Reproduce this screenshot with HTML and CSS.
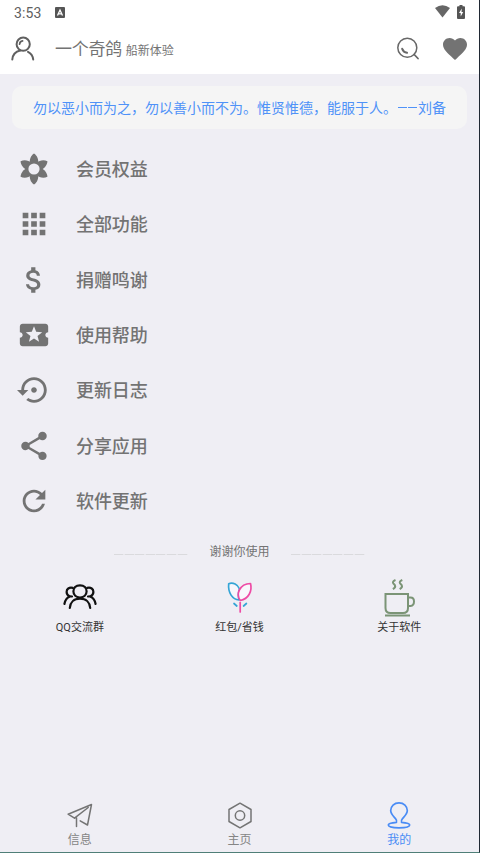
FILE: index.html
```html
<!DOCTYPE html>
<html lang="zh-CN">
<head>
<meta charset="utf-8">
<title>一个奇鸽</title>
<link rel="stylesheet" href="styles.css">
</head>
<body>
<div class="app">
  <header class="top">
    <div class="status">
      <span class="clock">3:53</span>
      <svg class="badge" viewBox="0 0 10 11"><rect width="10" height="11" rx="1" fill="#555"/><path d="M2.500 8.500 5 3l2.500 5.500M3.500 6.800h3" fill="none" stroke="#fff" stroke-width="1.300"/></svg>
      <svg class="wifi" viewBox="0 0 15 13"><path d="M0 3Q7.500-2.500 15 3L7.500 12.500Z" fill="#666"/></svg>
      <svg class="battery" viewBox="0 0 8 14"><path d="M2.500 0h3v1.300H7q1 0 1 1V13q0 1-1 1H1q-1 0-1-1V2.300q0-1 1-1h1.500Z" fill="#555"/><path d="M4.800 3.500 2 8h1.700v3.500L6.200 7H4.500Z" fill="#fff"/></svg>
    </div>
    <div class="bar">
      <svg class="user" viewBox="0 0 24 25" fill="none" stroke="#606060" stroke-width="2" stroke-linecap="round"><circle cx="12.200" cy="8.200" r="6.600"/><path d="M8.600 8.200a3.600 3.600 0 0 1 3-3.400" stroke-width="1.700"/><path d="M1.300 23.500C1.800 18.500 4.800 15.600 9.200 14.600M17 15.800c3 1.400 4.800 4 5.200 7.700"/></svg>
      <h1 class="title">一个奇鸽</h1>
      <span class="sub">船新体验</span>
      <svg class="search" viewBox="0 0 23 23" fill="none" stroke="#686868"><circle cx="10.300" cy="10.700" r="9.500" stroke-width="1.500"/><path d="M17.200 17.500 21 21.500" stroke-width="1.800" stroke-linecap="round"/><path d="M5.200 11.800q1.200 3.400 4.800 4" stroke-width="2" stroke-linecap="round"/></svg>
      <svg class="heart" viewBox="2 3 20 18.350" preserveAspectRatio="none"><path fill="#737373" d="M12 21.350l-1.450-1.320C5.400 15.360 2 12.280 2 8.500 2 5.420 4.420 3 7.500 3c1.740 0 3.410.81 4.500 2.090C13.090 3.810 14.760 3 16.500 3 19.580 3 22 5.420 22 8.500c0 3.780-3.400 6.860-8.550 11.540z"/></svg>
    </div>
  </header>

  <p class="quote">勿以恶小而为之，勿以善小而不为。惟贤惟德，能服于人。<i class="dash"></i><i class="dash"></i>刘备</p>

  <ul class="menu">
    <li><svg viewBox="0 0 34 34"><g fill="#737373"><path id="petal" d="M17 1.500C13.800 3.600 12 7.500 13 12.500h8C22 7.500 20.200 3.600 17 1.500Z"/><use href="#petal" transform="rotate(60 17 17)"/><use href="#petal" transform="rotate(120 17 17)"/><use href="#petal" transform="rotate(180 17 17)"/><use href="#petal" transform="rotate(240 17 17)"/><use href="#petal" transform="rotate(300 17 17)"/><circle cx="17" cy="17" r="8.500"/></g><circle cx="17" cy="17" r="5.600" fill="#efeef4"/></svg><span>会员权益</span></li>
    <li><svg viewBox="0 0 24 24"><path d="M4 8h4V4H4v4zm6 12h4v-4h-4v4zm-6 0h4v-4H4v4zm0-6h4v-4H4v4zm6 0h4v-4h-4v4zm6-10v4h4V4h-4zm-6 4h4V4h-4v4zm6 6h4v-4h-4v4zm0 6h4v-4h-4v4z"/></svg><span>全部功能</span></li>
    <li><svg viewBox="0 0 24 24"><path d="M11.800 10.900c-2.270-.59-3-1.200-3-2.150 0-1.090 1.010-1.850 2.700-1.850 1.780 0 2.440.85 2.500 2.100h2.210c-.07-1.720-1.120-3.300-3.210-3.810V3h-3v2.160c-1.940.42-3.500 1.680-3.500 3.610 0 2.310 1.910 3.460 4.700 4.130 2.500.6 3 1.480 3 2.410 0 .69-.49 1.790-2.700 1.790-2.060 0-2.870-.92-2.980-2.100h-2.200c.12 2.190 1.760 3.420 3.680 3.830V21h3v-2.150c1.950-.37 3.500-1.500 3.500-3.550 0-2.840-2.430-3.810-4.700-4.400z"/></svg><span>捐赠鸣谢</span></li>
    <li><svg viewBox="0 0 24 24"><path d="M20 12c0-1.100.9-2 2-2V6c0-1.100-.9-2-2-2H4c-1.100 0-1.990.9-1.990 2v4c1.100 0 1.990.9 1.990 2s-.89 2-2 2v4c0 1.100.9 2 2 2h16c1.100 0 2-.9 2-2v-4c-1.100 0-2-.9-2-2zm-4.420 4.800L12 14.500l-3.580 2.300 1.080-4.120-3.290-2.690 4.240-.25L12 5.800l1.540 3.950 4.240.25-3.290 2.690 1.090 4.110z"/></svg><span>使用帮助</span></li>
    <li><svg viewBox="0 0 24 24"><path d="M14 12c0-1.100-.9-2-2-2s-2 .9-2 2 .9 2 2 2 2-.9 2-2zm-2-9c-4.970 0-9 4.030-9 9H0l4 4 4-4H5c0-3.870 3.130-7 7-7s7 3.130 7 7-3.130 7-7 7c-1.510 0-2.910-.49-4.060-1.300l-1.420 1.440C8.040 20.300 9.940 21 12 21c4.970 0 9-4.030 9-9s-4.030-9-9-9z"/></svg><span>更新日志</span></li>
    <li><svg viewBox="0 0 24 24"><path d="M18 16.080c-.76 0-1.440.3-1.960.77L8.910 12.700c.05-.23.09-.46.09-.7s-.04-.47-.09-.7l7.050-4.110c.54.5 1.250.81 2.040.81 1.660 0 3-1.340 3-3s-1.340-3-3-3-3 1.340-3 3c0 .24.040.47.090.7L8.040 9.810C7.500 9.310 6.790 9 6 9c-1.660 0-3 1.340-3 3s1.340 3 3 3c.79 0 1.500-.31 2.040-.81l7.120 4.160c-.05.21-.08.43-.08.65 0 1.610 1.310 2.920 2.920 2.920s2.920-1.310 2.920-2.920-1.310-2.920-2.920-2.920z"/></svg><span>分享应用</span></li>
    <li><svg viewBox="0 0 24 24"><path d="M17.650 6.350C16.200 4.900 14.210 4 12 4c-4.420 0-7.990 3.580-7.990 8s3.570 8 7.990 8c3.730 0 6.840-2.550 7.730-6h-2.080c-.82 2.330-3.040 4-5.650 4-3.310 0-6-2.690-6-6s2.690-6 6-6c1.660 0 3.140.69 4.220 1.780L13 11h7V4l-2.350 2.350z"/></svg><span>软件更新</span></li>
  </ul>

  <div class="thanks"><i class="rule"></i><span>谢谢你使用</span><i class="rule"></i></div>

  <div class="links">
    <a class="link"><svg viewBox="0 0 36 40" fill="none" stroke="#111" stroke-width="2.200" stroke-linecap="round"><path d="M18 8.300c-4.300 0-6.600 2.600-6.600 6 0 3.600 2.800 6.200 6.600 6.200s6.600-2.600 6.600-6.200c0-3.400-2.300-6-6.600-6ZM7.800 31c.3-5.500 4.200-9.300 10.200-9.300s9.900 3.800 10.200 9.300"/><path d="M10.800 10.900C7 10 4.600 12 4.600 15c0 2.200 1.300 3.600 3.300 4.400-3.200 1.300-5 4-5.500 7.600M8 19.400l2 .1M25.200 10.900C29 10 31.400 12 31.400 15c0 2.200-1.300 3.600-3.300 4.400 3.200 1.300 5 4 5.500 7.600M28 19.400l-2 .1"/></svg><span>QQ交流群</span></a>
    <a class="link"><svg viewBox="0 0 36 40" fill="none" stroke-width="1.700" stroke-linecap="round" stroke-linejoin="round"><path d="M17 23C10.500 22.500 5.800 16 6.700 6.700c4.500-1.500 9 .8 10.800 5.300 0 0-2 5-.5 11Z" stroke="#35a5d6" fill="#f8f7fc"/><path d="M18.300 23.500C13.500 17 17.500 7 28.500 6.500 30.500 14 26.500 22 18.300 23.500Z" stroke="#ee4ba5" fill="#f8f7fc"/><path d="M18.200 25.500V35" stroke="#ee4ba5"/><path d="m12 26.500 2.800 2.500M24.400 26.500 21.600 29" stroke="#35a5d6"/></svg><span>红包/省钱</span></a>
    <a class="link"><svg viewBox="0 0 36 40" fill="none" stroke="#7b9476" stroke-width="2"><path d="M4.500 17H27v14q0 5-5 5H9.500q-5 0-5-5ZM27 20.500h2.500q3.500 0 3.500 4t-3.500 4.500H27M4 38.500h25"/><path d="M14.500 3q-3.500 1.500-2.200 3.300l1.600 1.900q1.200 2-2 4M21.300 3q-3.500 1.500-2.200 3.300l1.600 1.900q1.200 2-2 4"/></svg><span>关于软件</span></a>
  </div>

  <nav class="tabs">
    <a class="tab"><svg viewBox="0 0 28 30" fill="none" stroke="#747474" stroke-width="1.500" stroke-linejoin="round" stroke-linecap="round"><path d="m8.500 18.200-6.400-4L25.500 4.500 21.500 25 14.200 20.800M8.500 18.200 22.200 7.500M10.500 17.500V26.500"/></svg><span>信息</span></a>
    <a class="tab"><svg viewBox="0 0 28 30" fill="none" stroke="#747474" stroke-width="1.500" stroke-linejoin="round"><path d="M14 3.200 25 9.500V21.500L14 27.800 3 21.500V9.500Z"/><circle cx="14" cy="15.500" r="4.700"/></svg><span>主页</span></a>
    <a class="tab active"><svg viewBox="0 0 28 30" fill="none" stroke="#4a8cf5" stroke-width="1.700" stroke-linejoin="round"><path d="M11.500 22.300c.7-1.500.2-2.300-1-3.700-2.200-2.500-4.800-4.600-4.800-8C5.700 6.200 9.200 2.800 14 2.800s8.300 3.400 8.300 7.800c0 3.400-2.600 5.500-4.800 8-1.200 1.400-1.700 2.200-1 3.700 4.200.4 8.200 1 8.200 2.700 0 2.100-4.700 2.800-10.700 2.800S3.300 27.100 3.300 25c0-1.700 4-2.300 8.200-2.700Z"/></svg><span>我的</span></a>
  </nav>
</div>
</body>
</html>
```
FILE: styles.css
```css
* { box-sizing: border-box; }
body { margin: 0; font-family: Roboto, "Noto Sans CJK SC", sans-serif; }
svg { display: block; flex: none; }
.app {
  width: 480px; height: 853px; overflow: hidden;
  display: flex; flex-direction: column;
  background: #efeef4; color: #737373;
  border-right: 1px solid #202833; border-bottom: 1px solid #4f7f78;
}
.top { height: 74px; background: #fff; flex: none; }
.status { height: 25px; display: flex; align-items: center; padding: 0 14px; }
.clock { width: 41px; font-size: 14px; color: #606060; line-height: 24px; letter-spacing: .1px; }
.badge { width: 10px; height: 11px; }
.wifi { width: 15px; height: 13px; margin-left: auto; margin-right: 7px; margin-top: -2px; }
.battery { width: 8px; height: 14px; margin-top: -2px; }
.bar { height: 47px; display: flex; align-items: center; padding: 0 12px 0 11px; }
.user { width: 24px; height: 25px; }
.title { margin: 1px 0 0 20px; font-size: 17px; font-weight: 400; line-height: 24px; letter-spacing: -.3px; }
.sub { margin: 1px 0 0 4px; font-size: 12px; }
.search { width: 23px; height: 23px; margin-left: auto; margin-right: 23px; }
.heart { width: 24px; height: 22px; }
.quote {
  margin: 12px 12px 0; height: 43px; flex: none; border-radius: 10px;
  background: #f5f5f5; color: #4f92f8;
  font-size: 14px; line-height: 44px; text-align: center; white-space: nowrap;
}
.dash { display: inline-block; width: 9px; height: 1px; margin: 0 .75px; background: currentColor; vertical-align: 5px; }
.menu { list-style: none; margin: 12.400px 0 0; padding: 0 0 0 17.300px; flex: none; }
.menu li { height: 55.300px; display: flex; align-items: center; gap: 25px; font-size: 18px; font-weight: 500; }
.menu span { margin: -2px 0 0 -.3px; letter-spacing: -.1px; }
.menu svg { width: 34px; height: 34px; fill: #737373; }
.thanks { display: flex; justify-content: center; gap: 21px; height: 18px; margin-top: 15px; font-size: 12px; line-height: 18px; }
.rule {
  width: 74px; height: 1px; margin-top: 11px;
  background: repeating-linear-gradient(90deg, #dadadd 0 9px, #e9e8ed 9px 10.600px);
}
.links { display: flex; margin-top: 16px; }
.link, .tab { flex: 1; display: flex; flex-direction: column; align-items: center; }
.link { font-size: 11px; line-height: 16px; color: #333; gap: 3px; }
.link svg { width: 36px; height: 40px; }
.tabs { display: flex; margin-top: auto; height: 52px; }
.tab { font-size: 12px; line-height: 16px; color: #858585; gap: 2px; }
.tab svg { width: 28px; height: 30px; }
.tab.active { color: #4a8cf5; }
```
